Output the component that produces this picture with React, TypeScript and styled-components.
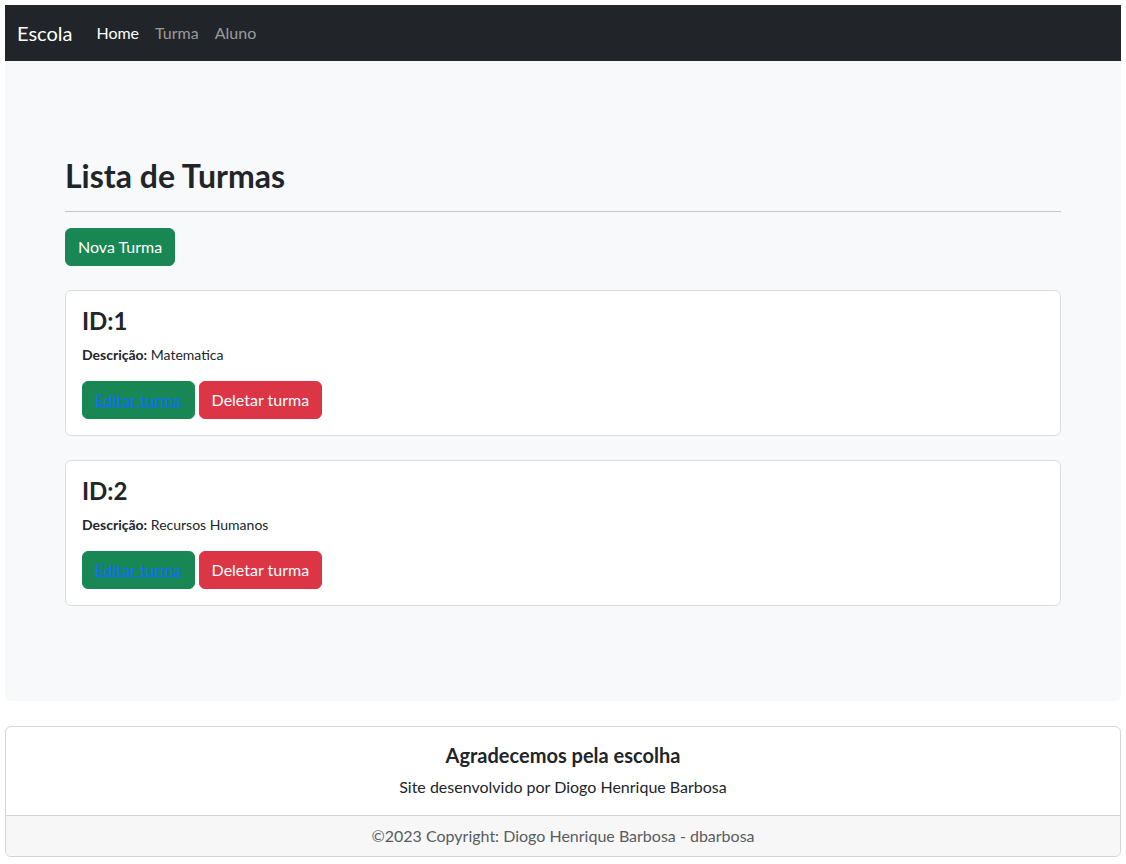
import React from "react";
import styled, { createGlobalStyle } from "styled-components";

const GlobalStyle = createGlobalStyle`
  * { box-sizing: border-box; }
  body {
    margin: 0;
    background: #fff;
    color: #212529;
    font-family: Lato, "Open Sans", sans-serif;
    font-size: 16px;
    line-height: 1.5;
  }
`;

const Page = styled.div`
  padding: 5px;
`;

const Nav = styled.nav`
  height: 56px;
  background: #212529;
  display: flex;
  align-items: center;
  padding: 0 12px;
`;

const Brand = styled.a`
  font-size: 20px;
  color: #fff;
  margin-right: 16px;
  text-decoration: none;
`;

const NavLink = styled.a<{ $active?: boolean }>`
  color: ${(p) => (p.$active ? "#fff" : "rgba(255,255,255,0.55)")};
  padding: 8px;
  text-decoration: none;
`;

const Main = styled.main`
  background: #f8f9fa;
  border-radius: 0 0 6px 6px;
  padding: 96px 60px 95px;
`;

const Title = styled.h2`
  font-size: 32px;
  font-weight: 700;
  line-height: 1.2;
  margin: 0;
`;

const Rule = styled.hr`
  border: 0;
  border-top: 1px solid #c5c6c7;
  margin: 16px 0;
`;

const Button = styled.button<{ $variant: "success" | "danger" }>`
  font-family: inherit;
  font-size: 16px;
  line-height: 24px;
  padding: 6px 12px;
  border: 1px solid ${(p) => (p.$variant === "success" ? "#198754" : "#dc3545")};
  background: ${(p) => (p.$variant === "success" ? "#198754" : "#dc3545")};
  color: #fff;
  border-radius: 6px;
  cursor: pointer;
`;

const EditLink = styled.a`
  color: #0d6efd;
  text-decoration: underline;
`;

const Card = styled.div`
  background: #fff;
  border: 1px solid #d9dbdd;
  border-radius: 6px;
  padding: 16px;
  margin-top: 24px;
`;

const CardId = styled.h4`
  font-size: 24px;
  font-weight: 700;
  line-height: 1.2;
  margin: 0 0 8px;
`;

const Desc = styled.p`
  font-size: 14px;
  line-height: 21px;
  margin: 0 0 16px;
`;

const Actions = styled.div`
  display: flex;
  gap: 4px;
`;

const Footer = styled.footer`
  margin-top: 25px;
  border: 1px solid #d4d5d6;
  border-radius: 6px;
  text-align: center;
  overflow: hidden;
`;

const FooterBody = styled.div`
  padding: 16px;
`;

const FooterTitle = styled.h5`
  font-size: 20px;
  font-weight: 700;
  line-height: 24px;
  margin: 0 0 8px;
`;

const FooterText = styled.p`
  margin: 0;
`;

const FooterBar = styled.div`
  background: #f7f7f7;
  border-top: 1px solid #d4d5d6;
  padding: 8px 16px;
  color: #595c5f;
`;

const turmas = [
  { id: 1, descricao: "Matematica" },
  { id: 2, descricao: "Recursos Humanos" },
];

export default function App() {
  return (
    <Page>
      <GlobalStyle />
      <Nav>
        <Brand href="#">Escola</Brand>
        <NavLink href="#" $active>Home</NavLink>
        <NavLink href="#">Turma</NavLink>
        <NavLink href="#">Aluno</NavLink>
      </Nav>
      <Main>
        <Title>Lista de Turmas</Title>
        <Rule />
        <Button $variant="success">Nova Turma</Button>
        {turmas.map((t) => (
          <Card key={t.id}>
            <CardId>ID:{t.id}</CardId>
            <Desc>
              <strong>Descrição:</strong> {t.descricao}
            </Desc>
            <Actions>
              <Button $variant="success">
                <EditLink>Editar turma</EditLink>
              </Button>
              <Button $variant="danger">Deletar turma</Button>
            </Actions>
          </Card>
        ))}
      </Main>
      <Footer>
        <FooterBody>
          <FooterTitle>Agradecemos pela escolha</FooterTitle>
          <FooterText>Site desenvolvido por Diogo Henrique Barbosa</FooterText>
        </FooterBody>
        <FooterBar>©2023 Copyright: Diogo Henrique Barbosa - dbarbosa</FooterBar>
      </Footer>
    </Page>
  );
}
